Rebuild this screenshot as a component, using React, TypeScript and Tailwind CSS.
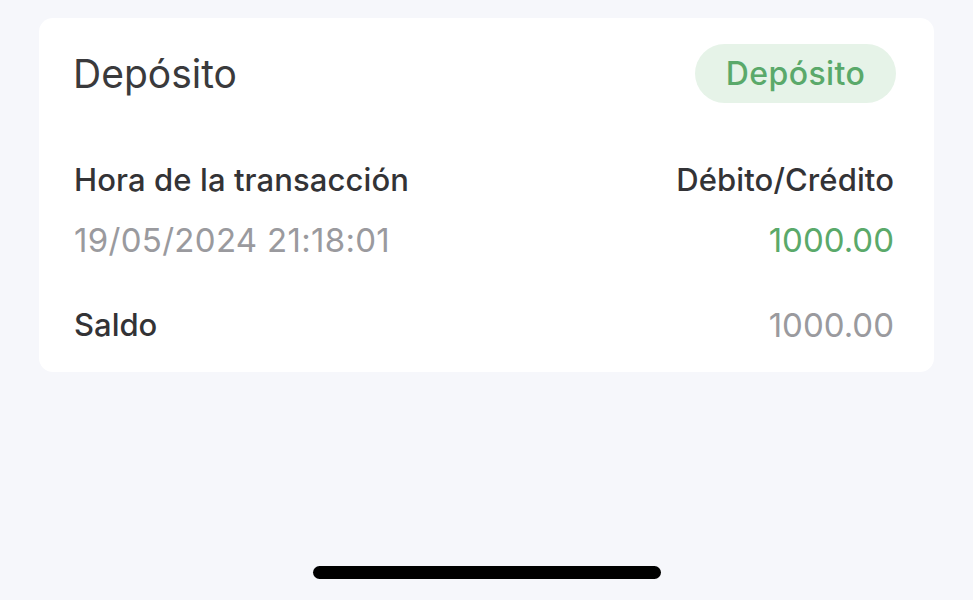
export default function App() {
  return (
    <div
      className="w-[973px] h-[600px] bg-[#f6f7fb] flex flex-col"
      style={{ fontFamily: "Inter, 'Noto Sans', sans-serif" }}
    >
      {/* Card */}
      <div className="mt-[18px] mx-[39px] h-[354px] bg-white rounded-[14px] pl-[35px] pr-[40px] pt-[26px] flex flex-col">
        {/* Header */}
        <div className="flex items-center justify-between h-[59px]">
          <h1 className="text-[39px] leading-none text-[#3a3a3c] -ml-[1px]">Depósito</h1>
          <span className="h-[59px] w-[201px] -mr-[2px] rounded-full bg-[#e6f3e8] text-[#5aa96a] text-[32px] tracking-[0.4px] font-medium flex items-center justify-center">
            Depósito
          </span>
        </div>

        {/* Time + amount */}
        <div className="mt-[57px] flex justify-between items-start">
          <div className="flex flex-col gap-[20px]">
            <span className="text-[31px] leading-[40px] font-medium tracking-[0.1px] text-[#333336]">Hora de la transacción</span>
            <span className="text-[33px] leading-[40px] tracking-[0.3px] text-[#9a9a9e]">19/05/2024 21:18:01</span>
          </div>
          <div className="flex flex-col items-end gap-[20px]">
            <span className="text-[31px] leading-[40px] font-medium tracking-[0.1px] text-[#333336]">Débito/Crédito</span>
            <span className="text-[33px] leading-[40px] text-[#5aa96a]">1000.00</span>
          </div>
        </div>

        {/* Balance */}
        <div className="mt-[45px] flex justify-between items-center">
          <span className="text-[31px] leading-[40px] font-medium text-[#333336]">Saldo</span>
          <span className="text-[33px] leading-[40px] text-[#9a9a9e]">1000.00</span>
        </div>
      </div>

      {/* Home indicator */}
      <div className="mt-auto mb-[21px] mx-auto w-[348px] h-[13px] rounded-full bg-black" />
    </div>
  );
}
